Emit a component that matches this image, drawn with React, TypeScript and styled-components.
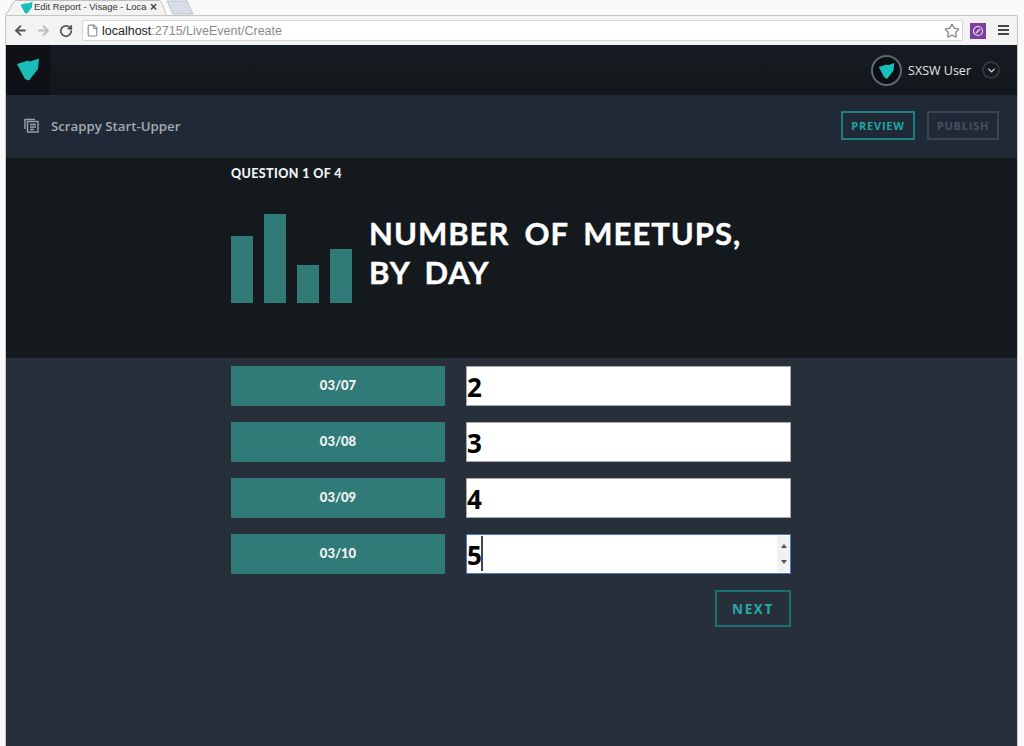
import React from 'react';
import styled, { createGlobalStyle } from 'styled-components';
import { ArrowLeft, ArrowRight, RotateCw, File, Star, ChevronDown } from 'lucide-react';

const GlobalStyle = createGlobalStyle`
  html, body {
    margin: 0;
    padding: 0;
    height: 746px;
    overflow: hidden;
    background: #fafafa;
  }
  * {
    box-sizing: border-box;
  }
`;

const Window = styled.div`
  width: 1024px;
  height: 746px;
  display: flex;
  flex-direction: column;
  overflow: hidden;
  font-family: 'Liberation Sans', Arial, sans-serif;
`;

const TabStrip = styled.div`
  height: 15px;
  display: flex;
  align-items: flex-start;
  padding-left: 5px;
  background: #fafafa;
`;

const TabShape = styled.div`
  position: relative;
  width: 162px;
  height: 15px;
  display: flex;
  align-items: center;
  padding: 0 0 1px 15px;
  flex-shrink: 0;
`;

const TabOutline = styled.svg`
  position: absolute;
  left: 0;
  top: 0;
`;

const TabIcon = styled.span`
  position: relative;
  display: flex;
`;

const TabTitle = styled.span`
  position: relative;
  width: 113px;
  margin-left: 1px;
  white-space: nowrap;
  font-size: 9.4px;
  line-height: 14px;
  color: #333;
`;

const TabClose = styled.span`
  position: relative;
  margin-left: 3px;
  font-size: 12px;
  line-height: 12px;
  font-weight: bold;
  color: #444;
`;

const NewTab = styled.svg`
  margin-left: -1px;
  flex-shrink: 0;
`;

const Toolbar = styled.div`
  height: 30px;
  margin: 0 6px 0 5px;
  display: flex;
  align-items: center;
  padding: 0 5px 0 7px;
  border: 1px solid #c4c4c4;
  border-bottom: 0;
  border-radius: 2px 2px 0 0;
  background: #f3f3f3;
`;

const NavIcons = styled.div`
  width: 69px;
  display: flex;
  align-items: center;
  gap: 8px;
  flex-shrink: 0;
`;

const AddressBar = styled.div`
  flex: 1;
  height: 21px;
  display: flex;
  align-items: center;
  padding: 0 2px 0 3px;
  border: 1px solid #d6d6d6;
  border-radius: 2px;
  background: #fff;
  font-size: 12.5px;
`;

const Host = styled.span`
  margin-left: 3px;
  color: #222;
`;

const UrlRest = styled.span`
  flex: 1;
  color: #8a8a8a;
`;

const Extension = styled.div`
  width: 16px;
  height: 16px;
  margin-left: 7px;
  display: flex;
  align-items: center;
  justify-content: center;
  background: #7b3fa0;
  flex-shrink: 0;
`;

const MenuBars = styled.div`
  width: 11px;
  height: 11px;
  margin-left: 12px;
  margin-right: 3px;
  flex-shrink: 0;
  background: repeating-linear-gradient(#444 0 2px, transparent 2px 4px);
`;

const Viewport = styled.main`
  flex: 1;
  min-height: 0;
  margin: 0 6px 0 5px;
  display: flex;
  flex-direction: column;
  border-left: 1px solid #c8c8c8;
  border-right: 1px solid #c8c8c8;
  background: #272f3b;
  font-family: Lato, 'Liberation Sans', sans-serif;
`;

const TopNav = styled.header`
  height: 50px;
  display: flex;
  align-items: center;
  padding-right: 17px;
  background: linear-gradient(#161b21, #12171b);
`;

const LogoCell = styled.div`
  width: 44px;
  height: 50px;
  display: flex;
  align-items: center;
  justify-content: center;
  padding-bottom: 3px;
  background: #0e1216;
`;

const UserBlock = styled.div`
  margin-left: auto;
  display: flex;
  align-items: center;
`;

const Avatar = styled.div`
  width: 31px;
  height: 31px;
  display: flex;
  align-items: center;
  justify-content: center;
  border: 2px solid #5f6872;
  border-radius: 50%;
  background: #0b0f12;
`;

const UserName = styled.span`
  margin-left: 6px;
  font-size: 12.5px;
  font-weight: 500;
  color: #e6e8ea;
  font-family: 'Open Sans', sans-serif;
`;

const UserCaret = styled.div`
  width: 18px;
  height: 18px;
  margin-left: 11px;
  display: flex;
  align-items: center;
  justify-content: center;
  border: 2px solid #2e3846;
  border-radius: 50%;
  color: #d5d9dd;
`;

const SubHeader = styled.div`
  height: 63px;
  display: flex;
  align-items: center;
  padding: 0 18px 2px 18px;
  background: #202a36;
`;

const ReportName = styled.span`
  margin-left: 12px;
  font-size: 13.25px;
  font-weight: 600;
  color: #a3aab2;
  font-family: 'Open Sans', sans-serif;
`;

const HeaderActions = styled.div`
  margin-left: auto;
  display: flex;
  gap: 12px;
`;

const OutlineButton = styled.button<{ $muted?: boolean }>`
  width: ${(p) => (p.$muted ? '72px' : '74px')};
  height: 29px;
  padding: 0;
  border: 2px solid ${(p) => (p.$muted ? '#3b4552' : '#1f7f7e')};
  background: transparent;
  font-family: 'Open Sans', sans-serif;
  font-size: 11px;
  font-weight: 700;
  letter-spacing: 0.8px;
  color: ${(p) => (p.$muted ? '#465160' : '#22a5a2')};
`;

const Hero = styled.section`
  height: 200px;
  padding: 8px 0 0 225px;
  background: #14191e;
`;

const QuestionCount = styled.div`
  font-size: 12.5px;
  line-height: 15px;
  font-weight: 900;
  letter-spacing: 0.4px;
  color: #f2f3f4;
`;

const HeroBody = styled.div`
  margin-top: 33px;
  display: flex;
  align-items: flex-start;
`;

const Title = styled.h1`
  margin: 0 0 0 17px;
  font-size: 31px;
  line-height: 39px;
  font-weight: 700;
  letter-spacing: 1px;
  word-spacing: 6.5px;
  color: #fff;
  -webkit-text-stroke: 0.4px #fff;
  width: 420px;
`;

const Answers = styled.section`
  flex: 1;
  padding: 8px 0 0 225px;
  display: flex;
  flex-direction: column;
  gap: 16px;
`;

const AnswerRow = styled.div`
  width: 560px;
  display: flex;
  gap: 21px;
`;

const DateLabel = styled.div`
  width: 214px;
  height: 40px;
  display: flex;
  align-items: center;
  justify-content: center;
  padding-bottom: 2px;
  background: #307a78;
  font-size: 13px;
  font-weight: 900;
  color: #f4f6f6;
`;

const Field = styled.div`
  position: relative;
  width: 325px;
  height: 40px;
`;

const NumberInput = styled.input<{ $focused?: boolean }>`
  display: block;
  width: 100%;
  height: 100%;
  padding: 2px 0 0 0;
  border: 1px solid ${(p) => (p.$focused ? '#4a78c8' : '#a9a9a9')};
  outline: none;
  background: #fff;
  font-family: 'Open Sans', Lato, sans-serif;
  font-size: 26px;
  font-weight: 700;
  color: #000;
`;

const Caret = styled.span`
  position: absolute;
  left: 15px;
  top: 2px;
  width: 1.5px;
  height: 35px;
  background: #444;
`;

const Spinner = styled.div`
  position: absolute;
  right: 1px;
  top: 2px;
  width: 13px;
  height: 36px;
  display: flex;
  flex-direction: column;
  align-items: center;
  justify-content: space-between;
  padding: 8px 0;
  background: #f1f1f1;
`;

const SpinUp = styled.span`
  width: 0;
  height: 0;
  border-left: 3px solid transparent;
  border-right: 3px solid transparent;
  border-bottom: 4px solid #555;
`;

const SpinDown = styled(SpinUp)`
  border-bottom: 0;
  border-top: 4px solid #555;
`;

const FormFooter = styled.div`
  width: 560px;
  display: flex;
  justify-content: flex-end;
`;

const NextButton = styled.button`
  width: 76px;
  height: 37px;
  padding: 0;
  border: 2px solid #1a6f6f;
  background: transparent;
  font-family: 'Open Sans', sans-serif;
  font-size: 13.5px;
  font-weight: 700;
  letter-spacing: 1.6px;
  color: #25aaa6;
`;

const Chart = styled.div`
  width: 121px;
  height: 89px;
  display: flex;
  align-items: flex-end;
  justify-content: space-between;
  flex-shrink: 0;
`;

const ChartBar = styled.div<{ $h: number }>`
  width: 22px;
  height: ${(p) => p.$h}px;
  background: #307a78;
`;

const Shield = ({ size }: { size: number }) => (
  <svg width={size} height={size} viewBox="0 0 24 24">
    <path d="M1 7 L12 3.5 L14 4.5 L23 1.5 L22 12 L13 23.5 L9 22 Z" fill="#1bbdb9" />
  </svg>
);

const answers = [
  { date: '03/07', value: '2' },
  { date: '03/08', value: '3' },
  { date: '03/09', value: '4' },
  { date: '03/10', value: '5', focused: true },
];

const bars = [67, 89, 38, 54];

export default function App() {
  return (
    <Window>
      <GlobalStyle />
      <TabStrip>
        <TabShape>
          <TabOutline width="162" height="15" viewBox="0 0 162 15">
            <path d="M0.5 15 L0.5 14 C4 13 6 4 10 0.5 L155 0.5 C158 4 160 13 161.5 15" fill="#f3f3f3" stroke="#bdbdbd" />
          </TabOutline>
          <TabIcon>
            <Shield size={13} />
          </TabIcon>
          <TabTitle>Edit Report - Visage - Loca</TabTitle>
          <TabClose>×</TabClose>
        </TabShape>
        <NewTab width="28" height="15" viewBox="0 0 28 15">
          <path d="M1 1 L21 1 L27 14 L7 14 Z" fill="#d8dee6" stroke="#bcc2ca" />
        </NewTab>
      </TabStrip>
      <Toolbar>
        <NavIcons>
          <ArrowLeft size={15} strokeWidth={3} color="#555" />
          <ArrowRight size={15} strokeWidth={3} color="#bbb" />
          <RotateCw size={14} strokeWidth={3} color="#555" />
        </NavIcons>
        <AddressBar>
          <File size={13} color="#888" />
          <Host>localhost</Host>
          <UrlRest>:2715/LiveEvent/Create</UrlRest>
          <Star size={16} color="#888" />
        </AddressBar>
        <Extension>
          <svg width="12" height="12" viewBox="0 0 12 12">
            <circle cx="6" cy="6" r="4.5" fill="none" stroke="#e6d8ef" strokeWidth="1.2" />
            <path d="M4 8 L8 4" stroke="#e6d8ef" strokeWidth="1.5" />
          </svg>
        </Extension>
        <MenuBars />
      </Toolbar>
      <Viewport>
        <TopNav>
          <LogoCell>
            <Shield size={24} />
          </LogoCell>
          <UserBlock>
            <Avatar>
              <Shield size={17} />
            </Avatar>
            <UserName>SXSW User</UserName>
            <UserCaret>
              <ChevronDown size={11} strokeWidth={3} />
            </UserCaret>
          </UserBlock>
        </TopNav>
        <SubHeader>
          <svg width="15" height="15" viewBox="0 0 15 15" fill="none" stroke="#9aa2ab" strokeWidth="1.4">
            <path d="M1 11 V1.5 H11" />
            <rect x="3.5" y="3.5" width="10.5" height="10.5" />
            <path d="M6 6.5 H12 M6 9 H12 M6 11.5 H10" />
          </svg>
          <ReportName>Scrappy Start-Upper</ReportName>
          <HeaderActions>
            <OutlineButton>PREVIEW</OutlineButton>
            <OutlineButton $muted>PUBLISH</OutlineButton>
          </HeaderActions>
        </SubHeader>
        <Hero>
          <QuestionCount>QUESTION 1 OF 4</QuestionCount>
          <HeroBody>
            <Chart>
              {bars.map((h, i) => (
                <ChartBar key={i} $h={h} />
              ))}
            </Chart>
            <Title>NUMBER OF MEETUPS, BY DAY</Title>
          </HeroBody>
        </Hero>
        <Answers>
          {answers.map((a) => (
            <AnswerRow key={a.date}>
              <DateLabel>{a.date}</DateLabel>
              <Field>
                <NumberInput readOnly value={a.value} $focused={a.focused} />
                {a.focused && (
                  <>
                    <Caret />
                    <Spinner>
                      <SpinUp />
                      <SpinDown />
                    </Spinner>
                  </>
                )}
              </Field>
            </AnswerRow>
          ))}
          <FormFooter>
            <NextButton>NEXT</NextButton>
          </FormFooter>
        </Answers>
      </Viewport>
    </Window>
  );
}
